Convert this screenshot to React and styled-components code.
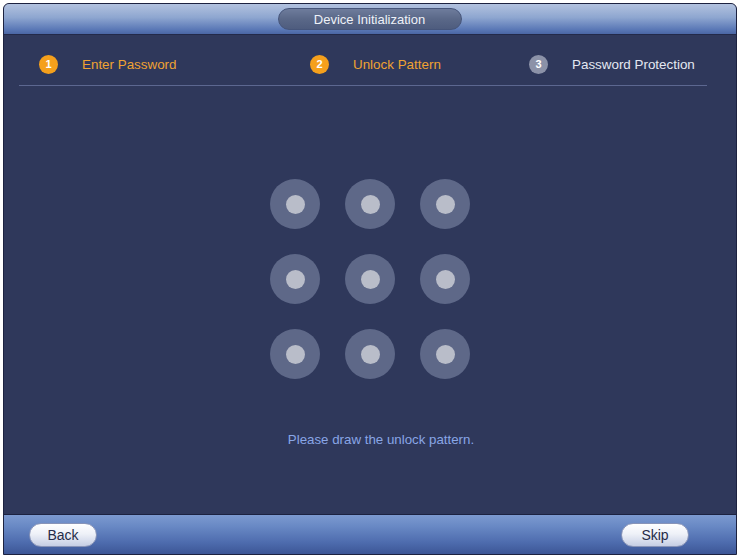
import styled, { createGlobalStyle } from 'styled-components';

const GlobalStyle = createGlobalStyle`
  html, body {
    margin: 0;
    padding: 0;
    background: #ffffff;
  }
  body {
    font-family: "Liberation Sans", Arial, sans-serif;
  }
`;

const steps = [
  { num: 1, label: 'Enter Password', active: true, width: 271 },
  { num: 2, label: 'Unlock Pattern', active: true, width: 219 },
  { num: 3, label: 'Password Protection', active: false },
];

const App = () => {
  return (
    <>
      <GlobalStyle />
      <Window>
        <Header>
          <TitlePill>Device Initialization</TitlePill>
        </Header>
        <StepsRow>
          {steps.map((s) => (
            <Step key={s.num} $width={s.width}>
              <StepNum $active={s.active}>{s.num}</StepNum>
              <StepLabel $active={s.active}>{s.label}</StepLabel>
            </Step>
          ))}
        </StepsRow>
        <Divider />
        <Main>
          <PatternGrid>
            {Array.from({ length: 9 }).map((_, i) => (
              <Dot key={i}>
                <DotCore />
              </Dot>
            ))}
          </PatternGrid>
          <Hint>Please draw the unlock pattern.</Hint>
        </Main>
        <Footer>
          <PillButton>Back</PillButton>
          <PillButton>Skip</PillButton>
        </Footer>
      </Window>
    </>
  );
};

export default App;

const Window = styled.div`
  margin: 3px 0 0 3px;
  width: 734px;
  height: 552px;
  box-sizing: border-box;
  border: 1px solid #1c2240;
  border-radius: 6px 6px 0 0;
  background: #2f385b;
  display: flex;
  flex-direction: column;
  overflow: hidden;
`;

const Header = styled.div`
  height: 30px;
  flex-shrink: 0;
  background: linear-gradient(to bottom, #b2c2df 0%, #8ea6d0 45%, #5a78b6 85%, #4a66a4 100%);
  border-bottom: 1px solid #232a4a;
  display: flex;
  justify-content: center;
  align-items: center;
`;

const TitlePill = styled.div`
  width: 184px;
  height: 22px;
  margin-left: -1px;
  box-sizing: border-box;
  border-radius: 11px;
  border: 1px solid #46557a;
  background: linear-gradient(to bottom, #6e7c9c 0%, #5a6888 50%, #4e5c7e 100%);
  color: #eef1f8;
  font-size: 13px;
  display: flex;
  align-items: center;
  justify-content: center;
`;

const StepsRow = styled.div`
  height: 50px;
  flex-shrink: 0;
  display: flex;
  align-items: center;
  padding-left: 35px;
  padding-top: 8px;
  box-sizing: border-box;
`;

const Step = styled.div`
  display: flex;
  align-items: center;
  width: ${(p) => (p.$width ? `${p.$width}px` : 'auto')};
`;

const StepNum = styled.div`
  width: 19px;
  height: 19px;
  border-radius: 50%;
  background: ${(p) => (p.$active ? '#f5a01c' : '#8c92a8')};
  color: #ffffff;
  font-size: 11px;
  font-weight: bold;
  display: flex;
  align-items: center;
  justify-content: center;
  margin-right: 24px;
`;

const StepLabel = styled.span`
  font-size: 13.4px;
  color: ${(p) => (p.$active ? '#f0a232' : '#e4e8f2')};
`;

const Divider = styled.div`
  height: 1px;
  flex-shrink: 0;
  margin: 0 29px 0 15px;
  background: #5c6790;
`;

const Main = styled.div`
  flex: 1;
  display: flex;
  flex-direction: column;
  align-items: center;
  padding-top: 93px;
`;

const PatternGrid = styled.div`
  display: grid;
  grid-template-columns: repeat(3, 50px);
  grid-auto-rows: 50px;
  gap: 25px;
`;

const Dot = styled.div`
  border-radius: 50%;
  background: #5e6888;
  display: flex;
  align-items: center;
  justify-content: center;
`;

const DotCore = styled.div`
  width: 19px;
  height: 19px;
  border-radius: 50%;
  background: #b9bdc9;
`;

const Hint = styled.div`
  margin: 53px 0 0 22px;
  font-size: 13.3px;
  color: #89a6e6;
`;

const Footer = styled.div`
  height: 40px;
  flex-shrink: 0;
  box-sizing: border-box;
  border-top: 1px solid #1c2240;
  background: linear-gradient(to bottom, #7c9ad0 0%, #6888c4 30%, #4e6cae 70%, #3c5696 100%);
  display: flex;
  align-items: center;
  justify-content: space-between;
  padding: 0 47px 0 25px;
`;

const PillButton = styled.button`
  width: 68px;
  height: 24px;
  border-radius: 12px;
  border: 1px solid #8894b8;
  background: linear-gradient(to bottom, #ffffff 0%, #eef1f8 45%, #c6cee4 100%);
  color: #262c48;
  font-family: "Liberation Sans", Arial, sans-serif;
  font-size: 14px;
  padding: 0;
  cursor: pointer;
`;
